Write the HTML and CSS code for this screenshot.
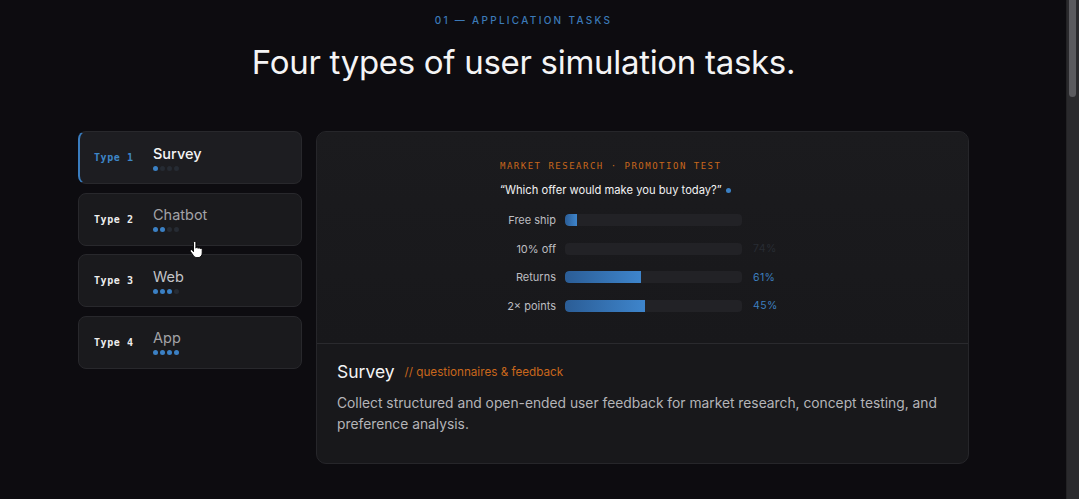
FILE: index.html
```html
<!DOCTYPE html>
<html lang="en">

<head>
    <meta charset="UTF-8">
    <meta name="viewport" content="width=device-width, initial-scale=1.0">
    <title>Application tasks</title>
    <link rel="stylesheet" href="styles.css">
</head>

<body>

    <!-- 01 application tasks -->
    <section class="section">
        <p class="eyebrow">01 — APPLICATION TASKS</p>
        <h1 class="title">Four types of user simulation tasks.</h1>

        <div class="tasks">
            <!-- tab list -->
            <div class="tabs">
                <div class="tab active">
                    <span class="tab-type">Type 1</span>
                    <div class="tab-body">
                        <div class="tab-name">Survey</div>
                        <div class="dots"><i class="on"></i><i></i><i></i><i></i></div>
                    </div>
                </div>
                <div class="tab">
                    <span class="tab-type">Type 2</span>
                    <div class="tab-body">
                        <div class="tab-name">Chatbot</div>
                        <div class="dots"><i class="on"></i><i class="on"></i><i></i><i></i></div>
                    </div>
                </div>
                <div class="tab">
                    <span class="tab-type">Type 3</span>
                    <div class="tab-body">
                        <div class="tab-name light">Web</div>
                        <div class="dots"><i class="on"></i><i class="on"></i><i class="on"></i><i></i></div>
                    </div>
                </div>
                <div class="tab">
                    <span class="tab-type">Type 4</span>
                    <div class="tab-body">
                        <div class="tab-name">App</div>
                        <div class="dots"><i class="on"></i><i class="on"></i><i class="on"></i><i class="on"></i></div>
                    </div>
                </div>

                <!-- mouse pointer -->
                <svg class="pointer" width="14" height="18" viewBox="0 0 14 18">
                    <path d="M4.5 1.6a1.2 1.2 0 0 1 2.4 0V7.2a1.1 1.1 0 0 1 2.2 0.2 1.1 1.1 0 0 1 2.1 0.4 1.1 1.1 0 0 1 2 0.6V12c0 2.6-1.7 4.6-4.1 4.6H7.9c-1.4 0-2.5-0.6-3.300-1.7L1.5 10.5a1.1 1.1 0 0 1 1.8-1.3L4.5 10.7Z"
                        fill="#fff" stroke="#000" stroke-width="0.9" stroke-linejoin="round" />
                </svg>
            </div>

            <!-- preview panel -->
            <div class="panel">
                <div class="demo">
                    <div class="demo-inner">
                        <p class="demo-tag">MARKET RESEARCH · PROMOTION TEST</p>
                        <p class="demo-question">“Which offer would make you buy today?” <span class="live"></span></p>

                        <div class="bars">
                            <div class="bar-row">
                                <span class="bar-label">Free ship</span>
                                <div class="bar"><div class="fill" style="width: 7%"></div></div>
                                <span class="bar-pct"></span>
                            </div>
                            <div class="bar-row">
                                <span class="bar-label">10% off</span>
                                <div class="bar"><div class="fill" style="width: 0%"></div></div>
                                <span class="bar-pct dim">74%</span>
                            </div>
                            <div class="bar-row">
                                <span class="bar-label">Returns</span>
                                <div class="bar"><div class="fill" style="width: 43%"></div></div>
                                <span class="bar-pct">61%</span>
                            </div>
                            <div class="bar-row">
                                <span class="bar-label">2× points</span>
                                <div class="bar"><div class="fill" style="width: 45%"></div></div>
                                <span class="bar-pct">45%</span>
                            </div>
                        </div>
                    </div>
                </div>

                <div class="info">
                    <h2 class="info-title">Survey <span class="info-note">// questionnaires &amp; feedback</span></h2>
                    <p class="info-text">Collect structured and open-ended user feedback for market research, concept testing, and preference analysis.</p>
                </div>
            </div>
        </div>
    </section>

    <!-- window scrollbar -->
    <div class="scrollbar"><div class="thumb"></div></div>

</body>

</html>
```

FILE: styles.css
```css
* {
    margin: 0;
    padding: 0;
    box-sizing: border-box;
}

body {
    background-color: #0d0c10;
    color: #f2f2f3;
    font-family: Inter, "Noto Sans", sans-serif;
    padding-right: 32px;
    height: 499px;
    overflow: hidden;
}

.section {
    width: 891px;
    margin: 0 auto;
    padding-top: 13px;
}

.eyebrow {
    text-align: center;
    font-size: 10px;
    line-height: 14px;
    letter-spacing: 2.3px;
    color: #3c7ab8;
    font-weight: 500;
}

.title {
    text-align: center;
    font-size: 33px;
    line-height: 40px;
    font-weight: 400;
    letter-spacing: -0.3px;
    margin-top: 15px;
    color: #f4f4f5;
}

.tasks {
    display: grid;
    grid-template-columns: 224px 653px;
    gap: 14px;
    margin-top: 49px;
}

/*
*   tabs
*/
.tabs {
    display: flex;
    flex-direction: column;
    gap: 8.67px;
    position: relative;
}

.tab {
    height: 53px;
    display: flex;
    align-items: center;
    padding-left: 15px;
    background-color: #1a1a1d;
    border: 1px solid #28282c;
    border-radius: 8px;
}

.tab.active {
    background-color: #1d1d21;
    border-left: 2px solid #3a7dbf;
    padding-left: 14px;
}

.tab-type {
    width: 59px;
    font-family: "DejaVu Sans Mono", monospace;
    font-weight: bold;
    font-size: 10px;
    letter-spacing: 0.6px;
    color: #eeeeee;
}

.tab.active .tab-type {
    color: #3e86c8;
}

.tab-name {
    font-size: 14.5px;
    line-height: 18px;
    color: #a3a3a8;
}

.tab-name.light {
    color: #c4c4c8;
}

.tab.active .tab-name {
    color: #f4f4f5;
    font-weight: 500;
}

.dots {
    display: flex;
    gap: 2px;
    margin-top: 3px;
}

.dots i {
    width: 5px;
    height: 5px;
    border-radius: 50%;
    background-color: #262b33;
}

.dots i.on {
    background-color: #3b80c4;
}

.pointer {
    position: absolute;
    left: 111px;
    top: 110px;
}

/*
*   panel
*/
.panel {
    background-color: #18181b;
    border: 1px solid #26262a;
    border-radius: 10px;
    overflow: hidden;
}

.demo {
    height: 212px;
    padding-top: 28px;
    background: linear-gradient(180deg, #1b1b1e, #18181b);
    border-bottom: 1px solid #2a2a2e;
}

.demo-inner {
    width: 285px;
    margin: 0 auto;
}

.demo-tag {
    font-family: "DejaVu Sans Mono", monospace;
    font-size: 9px;
    line-height: 12px;
    letter-spacing: 1.5px;
    color: #c8671c;
}

.demo-question {
    margin-top: 10px;
    font-size: 11.2px;
    line-height: 16px;
    color: #f2f2f3;
}

.live {
    display: inline-block;
    width: 5px;
    height: 5px;
    border-radius: 50%;
    background-color: #3b80c4;
    margin-left: 1px;
    vertical-align: middle;
}

.bars {
    margin-top: 8px;
}

.bar-row {
    display: grid;
    grid-template-columns: 56px 177px 32px;
    column-gap: 9px;
    align-items: center;
    height: 28.5px;
}

.bar-label {
    text-align: right;
    font-size: 11px;
    color: #bdbdc1;
}

.bar {
    height: 12px;
    border-radius: 4px;
    background-color: #222226;
    overflow: hidden;
}

.fill {
    height: 100%;
    border-radius: 4px 0 0 4px;
    background: linear-gradient(90deg, #2b5d96, #3e85cc);
}

.bar-pct {
    padding-left: 2px;
    font-size: 10.5px;
    letter-spacing: 0.4px;
    color: #3d7fbf;
}

.bar-pct.dim {
    color: #282c33;
}

/*
*   description
*/
.info {
    padding: 16px 20px 28px;
}

.info-title {
    font-size: 17.5px;
    line-height: 24px;
    font-weight: 400;
    color: #f4f4f5;
}

.info-note {
    margin-left: 5px;
    font-size: 11.7px;
    color: #c8671c;
    vertical-align: 2px;
}

.info-text {
    margin-top: 9px;
    font-size: 13.8px;
    line-height: 21px;
    color: #b4b4b8;
}

/*
*   scrollbar on the right edge
*/
.scrollbar {
    position: fixed;
    top: 0;
    right: 0;
    width: 13px;
    height: 100%;
    background-color: #2a2a2d;
    border-left: 1px solid #222224;
}

.thumb {
    width: 7px;
    height: 97px;
    margin-left: 2px;
    background-color: #5b5b5f;
    border-radius: 0 0 4px 4px;
}
```
